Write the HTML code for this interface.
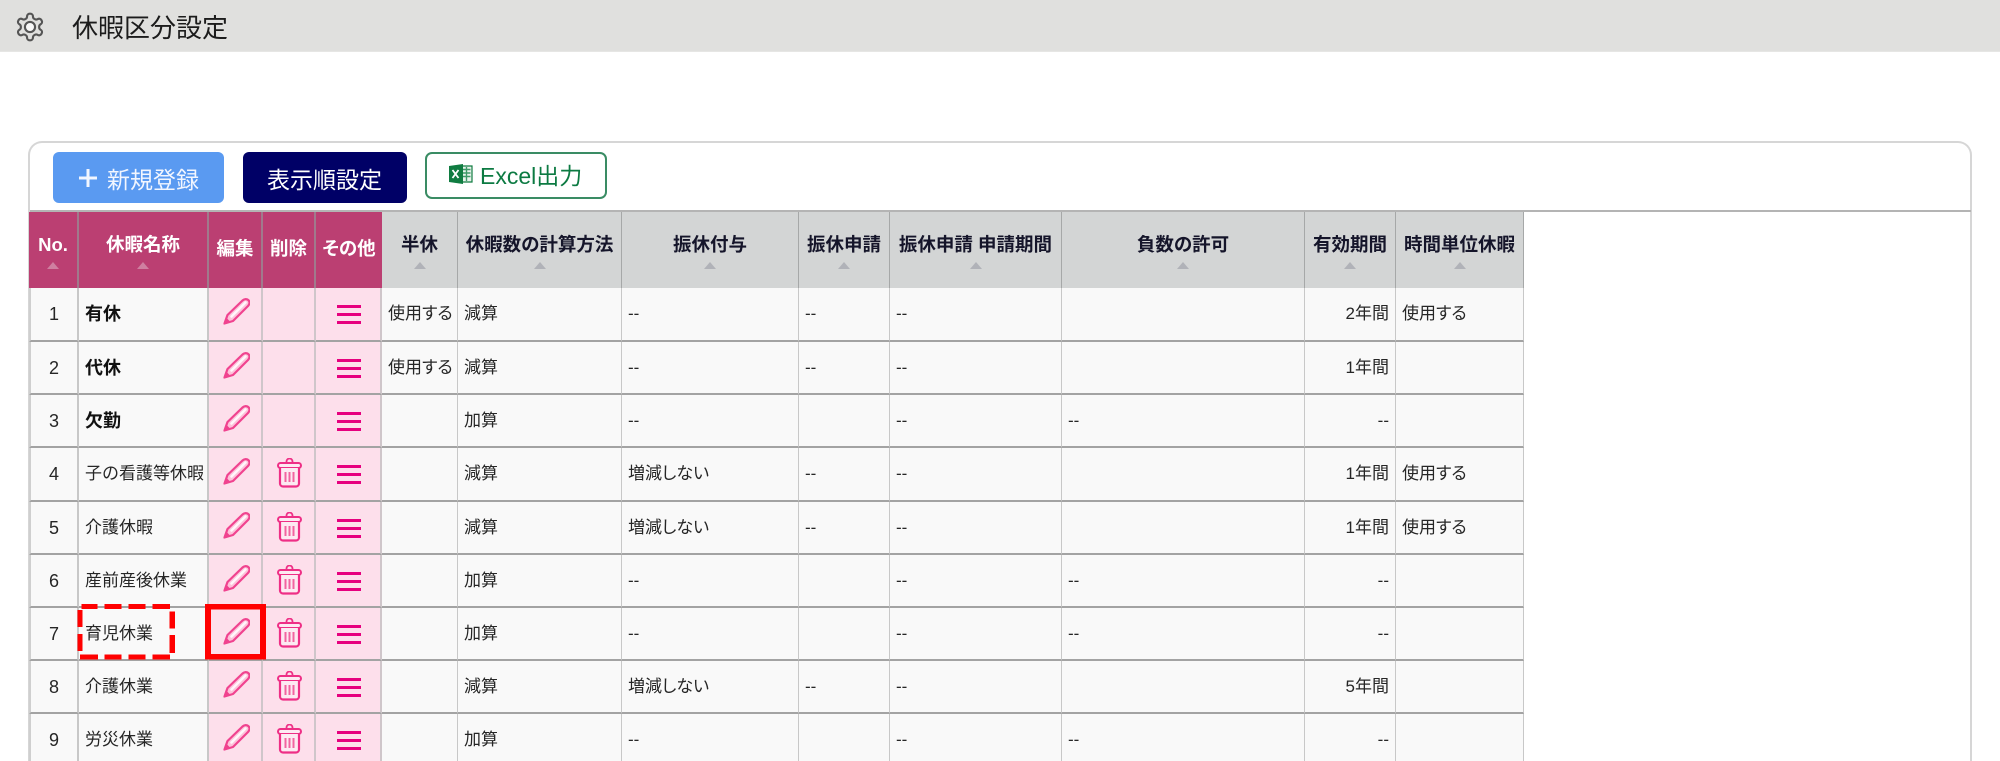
<!DOCTYPE html>
<html lang="ja">
<head>
<meta charset="utf-8">
<title>休暇区分設定</title>
<style>
*{box-sizing:border-box}
html,body{margin:0;padding:0;width:2000px;height:761px;overflow:hidden;background:#fff}
body{font-family:"Liberation Sans","Noto Sans CJK JP",sans-serif;color:#222}
#w{position:absolute;left:0;top:0;width:2000px;height:761px;overflow:hidden}
.top{position:absolute;left:0;top:0;width:2000px;height:52px;background:#e0e0de;border-bottom:1px solid #e6e6e4}
.gear{position:absolute;left:14px;top:11px}
.title{position:absolute;left:72px;top:9px;font-size:26px;line-height:38px;color:#1c1c1c;white-space:nowrap}
.panel{position:absolute;left:28px;top:141px;width:1944px;height:620px;border:2px solid #d6d6d6;border-bottom:0;border-radius:14px 14px 0 0;background:#fff}
.btn{position:absolute;top:152px;height:51px;border-radius:6px;color:#fff;font-size:23px;line-height:51px;white-space:nowrap}
.b1{left:53px;width:171px;background:#5a9af1;color:#f2f6ff}
.b1 span{position:absolute;left:54px;top:3px}
.b2{left:243px;width:164px;background:#000066}
.b2 span{position:absolute;left:24px;top:3px}
.b3{position:absolute;left:425px;top:152px;width:182px;height:47px;border:2px solid #3a8c64;border-radius:7px;background:#fff;color:#0c7a42;font-size:23px;line-height:41px;white-space:nowrap}
.b3 span{position:absolute;left:53px;top:2px}
.rule{position:absolute;left:30px;top:210px;width:1941px;height:2px;background:#b4b4b4}
table{position:absolute;left:29px;top:212px;width:1495px;table-layout:fixed;border-collapse:separate;border-spacing:0}
th{height:76px;padding:0;font-size:18.5px;font-weight:700;background:#d3d5d5;color:#15152a;border-right:1px solid #a6a8a8;text-align:center;vertical-align:top;position:relative;white-space:nowrap;font-feature-settings:"palt"}
th.p{background:#bb3f72;color:#fff;border-right:2px solid #a07a8c}
th b{position:absolute;left:0;right:0;top:20px;line-height:26px;font-weight:700}
th.n b{top:24px}
th i{position:absolute;left:50%;top:50px;margin-left:-6px;width:0;height:0;border-left:6px solid transparent;border-right:6px solid transparent;border-bottom:7px solid #b0b2b8}
th.p i{border-bottom-color:#cf7fa0}
td{padding:0 6px;font-size:17px;line-height:24px;background:#f9f9f9;border-right:1px solid #c8c8c8;border-bottom:2px solid #a3a3a3;white-space:nowrap;overflow:hidden;position:relative;color:#262626;font-feature-settings:"palt"}
td.c{text-align:center;padding:0}
td.r{text-align:right}
td.m{font-weight:700;color:#111;font-size:18px}
td.k{background:#fddfeb;padding:0;border-right:2px solid #cfc6ca}
td.nm{border-right:2px solid #c8c8c8;font-feature-settings:normal}
td.no{font-size:18px;border-right:2px solid #c8c8c8;border-left:2px solid #cfcfcf}
tr.last td{border-bottom:0;vertical-align:top;padding-top:14px}
tr.last td.k,tr.last td.k svg{padding-top:0}
svg.a{position:absolute;left:14px;top:10px;display:block}
svg.h{position:absolute;left:21px;top:17px;display:block}
.ov{position:absolute;left:0;top:0;pointer-events:none}
</style>
</head>
<body>
<svg width="0" height="0" style="position:absolute">
<defs>
<symbol id="p" viewBox="0 0 27 27">
<path d="M1.5 25.5L4.5 17L19.5 2.5C21.5.7 24 .7 25.5 2.2C27 3.8 26.8 6 25 8L10 23Z" fill="#fdc3da" stroke="#f0438f" stroke-width="2.2" stroke-linejoin="round"/>
<path d="M1.5 25.5L3.2 20.5L6.5 24Z" fill="#f0438f" stroke="#f0438f" stroke-width="1.4"/>
<path d="M8.5 18.5L22.5 4.5" stroke="#fff6fa" stroke-width="2.6" stroke-linecap="round"/>
</symbol>
<symbol id="t" viewBox="0 0 25 30">
<path d="M9.5 5V3.5a3 3 0 0 1 6 0V5" fill="none" stroke="#ee2f86" stroke-width="1.8"/>
<rect x="1" y="5" width="23" height="5" rx="2.5" fill="#fdeaf2" stroke="#ee2f86" stroke-width="2"/>
<path d="M3 10V25.5a3 3 0 0 0 3 3H19a3 3 0 0 0 3-3V10" fill="#fdeaf2" stroke="#ee2f86" stroke-width="2.2"/>
<path d="M8.5 14V24M12.5 14V24M16.5 14V24" stroke="#f264a0" stroke-width="2"/>
</symbol>
<symbol id="h" viewBox="0 0 24 19">
<path d="M0 1.5H24M0 9.5H24M0 17.5H24" stroke="#e6007e" stroke-width="3"/>
</symbol>
</defs>
</svg>
<div id="w">
<div class="top"></div>
<svg class="gear" width="32" height="32" viewBox="0 0 24 24" fill="none" stroke="#555" stroke-width="1.6" stroke-linejoin="round">
<path d="M12.22 2h-.44a2 2 0 0 0-2 2v.18a2 2 0 0 1-1 1.73l-.43.25a2 2 0 0 1-2 0l-.15-.08a2 2 0 0 0-2.73.73l-.22.38a2 2 0 0 0 .73 2.73l.15.1a2 2 0 0 1 1 1.72v.51a2 2 0 0 1-1 1.74l-.15.09a2 2 0 0 0-.73 2.73l.22.38a2 2 0 0 0 2.73.73l.15-.08a2 2 0 0 1 2 0l.43.25a2 2 0 0 1 1 1.73V20a2 2 0 0 0 2 2h.44a2 2 0 0 0 2-2v-.18a2 2 0 0 1 1-1.73l.43-.25a2 2 0 0 1 2 0l.15.08a2 2 0 0 0 2.73-.73l.22-.39a2 2 0 0 0-.73-2.73l-.15-.08a2 2 0 0 1-1-1.74v-.5a2 2 0 0 1 1-1.74l.15-.09a2 2 0 0 0 .73-2.73l-.22-.38a2 2 0 0 0-2.73-.73l-.15.08a2 2 0 0 1-2 0l-.43-.25a2 2 0 0 1-1-1.73V4a2 2 0 0 0-2-2z"/>
<circle cx="12" cy="12" r="3.8" fill="#f8f8f8"/>
</svg>
<div class="title">休暇区分設定</div>

<div class="panel"></div>
<div class="btn b1">
<svg style="position:absolute;left:26px;top:17px" width="18" height="18" viewBox="0 0 18 18"><path d="M9 0V18M0 9H18" stroke="#f2f6ff" stroke-width="3"/></svg>
<span>新規登録</span></div>
<div class="btn b2"><span>表示順設定</span></div>
<div class="b3">
<svg style="position:absolute;left:22px;top:10px" width="24" height="20" viewBox="0 0 24 20">
<path d="M12 2H23V18H12Z" fill="#e8f3ec" stroke="#107c41" stroke-width="1.2"/>
<path d="M14 5.5H21.5M14 9H21.5M14 12.5H21.5M17.5 3V17" stroke="#3f9a68" stroke-width="1.4"/>
<path d="M0 2L14 0V20L0 18Z" fill="#107c41"/>
<path d="M3.5 6L9.5 14M9.5 6L3.5 14" stroke="#fff" stroke-width="1.8"/>
</svg>
<span>Excel出力</span></div>
<div class="rule"></div>

<table>
<colgroup>
<col style="width:50px"><col style="width:130px"><col style="width:54px"><col style="width:53px"><col style="width:66px"><col style="width:76px"><col style="width:164px"><col style="width:177px"><col style="width:91px"><col style="width:172px"><col style="width:243px"><col style="width:91px"><col style="width:128px">
</colgroup>
<thead>
<tr>
<th class="p"><b>No.</b><i></i></th>
<th class="p"><b>休暇名称</b><i></i></th>
<th class="p n"><b>編集</b></th>
<th class="p n"><b>削除</b></th>
<th class="p n" style="border-right:0"><b>その他</b></th>
<th><b>半休</b><i></i></th>
<th><b>休暇数の計算方法</b><i></i></th>
<th><b>振休付与</b><i></i></th>
<th><b>振休申請</b><i></i></th>
<th><b>振休申請 申請期間</b><i></i></th>
<th><b>負数の許可</b><i></i></th>
<th><b>有効期間</b><i></i></th>
<th><b>時間単位休暇</b><i></i></th>
</tr>
</thead>
<tbody>
<tr style="height:54px"><td class="no c">1</td><td class="nm m">有休</td><td class="k"><svg class="a" width="27" height="27"><use href="#p"/></svg></td><td class="k"></td><td class="k"><svg class="h" width="24" height="19"><use href="#h"/></svg></td><td>使用する</td><td>減算</td><td>--</td><td>--</td><td>--</td><td></td><td class="r">2年間</td><td>使用する</td></tr>
<tr style="height:53px"><td class="no c">2</td><td class="nm m">代休</td><td class="k"><svg class="a" width="27" height="27"><use href="#p"/></svg></td><td class="k"></td><td class="k"><svg class="h" width="24" height="19"><use href="#h"/></svg></td><td>使用する</td><td>減算</td><td>--</td><td>--</td><td>--</td><td></td><td class="r">1年間</td><td></td></tr>
<tr style="height:53px"><td class="no c">3</td><td class="nm m">欠勤</td><td class="k"><svg class="a" width="27" height="27"><use href="#p"/></svg></td><td class="k"></td><td class="k"><svg class="h" width="24" height="19"><use href="#h"/></svg></td><td></td><td>加算</td><td>--</td><td></td><td>--</td><td>--</td><td class="r">--</td><td></td></tr>
<tr style="height:54px"><td class="no c">4</td><td class="nm">子の看護等休暇</td><td class="k"><svg class="a" width="27" height="27"><use href="#p"/></svg></td><td class="k"><svg class="a" width="25" height="30"><use href="#t"/></svg></td><td class="k"><svg class="h" width="24" height="19"><use href="#h"/></svg></td><td></td><td>減算</td><td>増減しない</td><td>--</td><td>--</td><td></td><td class="r">1年間</td><td>使用する</td></tr>
<tr style="height:53px"><td class="no c">5</td><td class="nm">介護休暇</td><td class="k"><svg class="a" width="27" height="27"><use href="#p"/></svg></td><td class="k"><svg class="a" width="25" height="30"><use href="#t"/></svg></td><td class="k"><svg class="h" width="24" height="19"><use href="#h"/></svg></td><td></td><td>減算</td><td>増減しない</td><td>--</td><td>--</td><td></td><td class="r">1年間</td><td>使用する</td></tr>
<tr style="height:53px"><td class="no c">6</td><td class="nm">産前産後休業</td><td class="k"><svg class="a" width="27" height="27"><use href="#p"/></svg></td><td class="k"><svg class="a" width="25" height="30"><use href="#t"/></svg></td><td class="k"><svg class="h" width="24" height="19"><use href="#h"/></svg></td><td></td><td>加算</td><td>--</td><td></td><td>--</td><td>--</td><td class="r">--</td><td></td></tr>
<tr style="height:53px"><td class="no c">7</td><td class="nm">育児休業</td><td class="k"><svg class="a" width="27" height="27"><use href="#p"/></svg></td><td class="k"><svg class="a" width="25" height="30"><use href="#t"/></svg></td><td class="k"><svg class="h" width="24" height="19"><use href="#h"/></svg></td><td></td><td>加算</td><td>--</td><td></td><td>--</td><td>--</td><td class="r">--</td><td></td></tr>
<tr style="height:53px"><td class="no c">8</td><td class="nm">介護休業</td><td class="k"><svg class="a" width="27" height="27"><use href="#p"/></svg></td><td class="k"><svg class="a" width="25" height="30"><use href="#t"/></svg></td><td class="k"><svg class="h" width="24" height="19"><use href="#h"/></svg></td><td></td><td>減算</td><td>増減しない</td><td>--</td><td>--</td><td></td><td class="r">5年間</td><td></td></tr>
<tr class="last" style="height:47px"><td class="no c">9</td><td class="nm">労災休業</td><td class="k"><svg class="a" width="27" height="27"><use href="#p"/></svg></td><td class="k"><svg class="a" width="25" height="30"><use href="#t"/></svg></td><td class="k"><svg class="h" width="24" height="19"><use href="#h"/></svg></td><td></td><td>加算</td><td>--</td><td></td><td>--</td><td>--</td><td class="r">--</td><td></td></tr>
</tbody>
</table>

<svg class="ov" width="2000" height="761" fill="#ff0000">
<rect x="205" y="604" width="61" height="5.5"/><rect x="205" y="654" width="61" height="5.5"/><rect x="205" y="604" width="6" height="55.5"/><rect x="260" y="604" width="6" height="55.5"/>
<rect x="81.5" y="604" width="16" height="5"/><rect x="104.5" y="604" width="17" height="5"/><rect x="128.5" y="604" width="17" height="5"/><rect x="152.5" y="604" width="17.5" height="5"/>
<rect x="80" y="654.5" width="18" height="5"/><rect x="104.5" y="654.5" width="17" height="5"/><rect x="128.5" y="654.5" width="17" height="5"/><rect x="152.5" y="654.5" width="17.5" height="5"/>
<rect x="77.5" y="610" width="5" height="17"/><rect x="77.5" y="634" width="5" height="17"/>
<rect x="169.5" y="611.5" width="5.5" height="17"/><rect x="169.5" y="635" width="5.5" height="18"/>
</svg>
</div>
</body>
</html>
